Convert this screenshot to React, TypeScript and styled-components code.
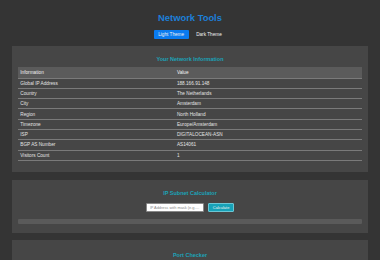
import styled, { createGlobalStyle } from "styled-components";

const GlobalStyle = createGlobalStyle`
  html, body {
    margin: 0;
    padding: 0;
    background: #343434;
    font-family: "Liberation Sans", Arial, sans-serif;
    color: #e6e6e6;
  }
`;

const rows: [string, string][] = [
  ["Global IP Address", "188.166.91.148"],
  ["Country", "The Netherlands"],
  ["City", "Amsterdam"],
  ["Region", "North Holland"],
  ["Timezone", "Europe/Amsterdam"],
  ["ISP", "DIGITALOCEAN-ASN"],
  ["BGP AS Number", "AS14061"],
  ["Visitors Count", "1"],
];

export default function App() {
  return (
    <>
      <GlobalStyle />
      <Page>
        <Title>Network Tools</Title>
        <ThemeBar>
          <ThemeButton $active>Light Theme</ThemeButton>
          <ThemeButton>Dark Theme</ThemeButton>
        </ThemeBar>

        <Card>
          <CardTitle>Your Network Information</CardTitle>
          <Table>
            <thead>
              <tr>
                <Th>Information</Th>
                <Th>Value</Th>
              </tr>
            </thead>
            <tbody>
              {rows.map(([k, v]) => (
                <tr key={k}>
                  <Td>{k}</Td>
                  <Td>{v}</Td>
                </tr>
              ))}
            </tbody>
          </Table>
        </Card>

        <Card>
          <CardTitle>IP Subnet Calculator</CardTitle>
          <FormRow>
            <Input placeholder="IP Address with mask (e.g. 192.168.1.0/24)" />
            <ActionButton>Calculate</ActionButton>
          </FormRow>
          <ResultBar />
        </Card>

        <Card>
          <CardTitle $top={6}>Port Checker</CardTitle>
        </Card>
      </Page>
    </>
  );
}

const Page = styled.div`
  padding: 12px 12px 0;
  display: flex;
  flex-direction: column;
`;

const Title = styled.h1`
  margin: 0;
  font-size: 9.4px;
  line-height: 11px;
  font-weight: bold;
  text-align: center;
  color: #1c7fd9;
`;

const ThemeBar = styled.div`
  display: flex;
  justify-content: center;
  gap: 3px;
  margin: 7px 0 7px;
`;

const ThemeButton = styled.button<{ $active?: boolean }>`
  font-family: inherit;
  font-size: 4.7px;
  line-height: 5px;
  height: 9px;
  padding: 0 4.5px;
  border: none;
  border-radius: 1px;
  color: #f2f2f2;
  background: ${(p) => (p.$active ? "#0a7bf0" : "transparent")};
`;

const Card = styled.section`
  background: #464646;
  padding: 6px;
  margin-bottom: 7.5px;
  display: flex;
  flex-direction: column;
`;

const CardTitle = styled.h2<{ $top?: number }>`
  margin: ${(p) => p.$top ?? 4}px 0 5px;
  font-size: 5.5px;
  line-height: 6px;
  font-weight: bold;
  text-align: center;
  color: #1ba3b8;
`;

const Table = styled.table`
  width: 100%;
  border-collapse: collapse;
  margin-bottom: 5.5px;
  font-size: 4.7px;
`;

const Th = styled.th`
  text-align: left;
  font-weight: normal;
  height: 10.5px;
  padding: 0 2.3px;
  background: #5b5b5b;
  color: #f4f4f4;
  border-bottom: 1px solid #7a7a7a;
  &:first-child {
    width: 152px;
  }
`;

const Td = styled.td`
  height: 9.3px;
  padding: 0 2.3px;
  color: #e4e4e4;
  border-bottom: 1px solid #7a7a7a;
`;

const FormRow = styled.div`
  display: flex;
  justify-content: center;
  align-items: center;
  gap: 4.7px;
  margin-top: 2px;
`;

const Input = styled.input`
  box-sizing: border-box;
  width: 57.5px;
  height: 9.4px;
  padding: 0 2.5px;
  font-family: inherit;
  font-size: 3.9px;
  border: 0.5px solid #888;
  border-radius: 1px;
  background: #fff;
  text-overflow: ellipsis;
  &::placeholder {
    color: #8a8a8a;
  }
`;

const ActionButton = styled.button`
  box-sizing: border-box;
  height: 9.4px;
  padding: 0 3.5px;
  font-family: inherit;
  font-size: 4px;
  color: #f0f0f0;
  background: #17a2b8;
  border: 0.7px solid #6cc6d4;
  border-radius: 1px;
`;

const ResultBar = styled.div`
  height: 5.3px;
  margin: 6.3px 0 2.7px;
  background: #5a5a5a;
  border-radius: 1px;
`;
